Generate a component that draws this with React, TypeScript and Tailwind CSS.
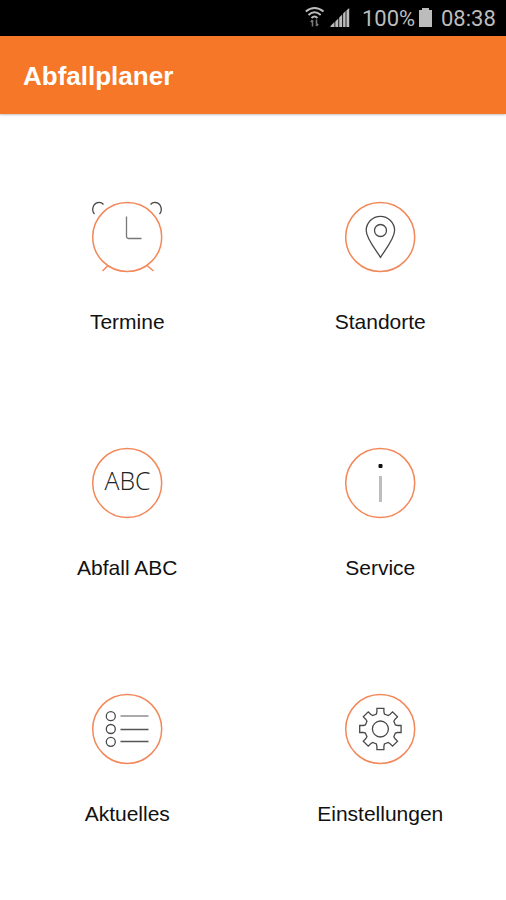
import type { ReactNode } from "react";

const INK = "#4a4a4a";
const ORANGE = "#f3885a";

function Ring({ children }: { children: ReactNode }) {
  return (
    <svg className="block h-[80px] w-[80px]" viewBox="-40 -40 80 80" fill="none" strokeWidth="1.3">
      <circle cx=".2" r="34.5" stroke={ORANGE} strokeWidth="1.5" />
      {children}
    </svg>
  );
}

function gearPath() {
  const tooth = [[-4, -15], [-3.5, -17.3], [-3.5, -20.7], [3.5, -20.7], [3.5, -17.3], [4, -15]];
  const points: string[] = [];
  for (let i = 0; i < 8; i++) {
    const a = (i * Math.PI) / 4;
    for (const [x, y] of tooth) {
      const px = x * Math.cos(a) - y * Math.sin(a);
      const py = x * Math.sin(a) + y * Math.cos(a);
      points.push(px.toFixed(2) + " " + py.toFixed(2));
    }
  }
  return "M" + points.join("L") + "Z";
}

const items: { label: string; icon: ReactNode }[] = [
  {
    label: "Termine",
    icon: (
      <>
        <path d="M-.5-20.5V-1Q-.5 1.5 2 1.5H14.5" stroke="#777" strokeWidth="1.3" />
        <path d="M-32.5-23C-36-27-34-34-28.5-34.5Q-25.5-34.8-23.5-32.5M32.5-23C36-27 34-34 28.5-34.5Q25.5-34.8 23.5-32.5" stroke={INK} />
        <path d="M-19 28.5L-24.5 34M20 28.5L26.5 34" stroke={ORANGE} strokeWidth="1.5" />
      </>
    ),
  },
  {
    label: "Standorte",
    icon: (
      <g stroke={INK}>
        <path d="M.5 20.3C-4 13-13.8 1.5-13.8-6.5A14.2 14.2 0 0 1 14.6-6.5C14.6 1.5 5 13 .5 20.3Z" />
        <circle cx=".5" cy="-6.5" r="6" />
      </g>
    ),
  },
  {
    label: "Abfall ABC",
    icon: (
      <text x=".5" y="7" textAnchor="middle" textLength="46" lengthAdjust="spacingAndGlyphs" fontSize="25" fontWeight="300" fill="#222" className="font-['Open_Sans',sans-serif]">
        ABC
      </text>
    ),
  },
  {
    label: "Service",
    icon: (
      <>
        <rect x="-1.5" y="-19" width="4" height="4" rx="1" fill="#111" />
        <rect x="-1" y="-7" width="3" height="26" fill="#bdbdbd" />
      </>
    ),
  },
  {
    label: "Aktuelles",
    icon: (
      <g stroke={INK}>
        <circle cx="-16.2" cy="-12.8" r="4.5" />
        <circle cx="-16.2" cy="0" r="4.5" />
        <circle cx="-16.2" cy="12.8" r="4.5" />
        <path d="M-6.5-13H21.5" stroke="#aaa" strokeWidth="2" />
        <path d="M-6.5 .5H21.5M-6.5 12.5H21.5" stroke="#555" />
      </g>
    ),
  },
  {
    label: "Einstellungen",
    icon: (
      <g stroke={INK}>
        <path d={gearPath()} transform="translate(.4 0)" />
        <circle cx=".4" r="8" />
      </g>
    ),
  },
];

function StatusBar() {
  return (
    <div className="flex h-9 items-center bg-black pl-[305px] font-['Roboto',sans-serif] text-[22px] text-[#bcbcbc]">
      <svg className="block h-9 w-[50px] shrink-0" viewBox="0 0 50 36" fill="none" stroke="#bcbcbc" strokeWidth="2">
        <path d="M.8 11.500Q9.500 4.500 18.500 11.500M3.500 15Q9.500 9.500 15.700 15M6.500 18Q9.500 15 12.500 18" />
        <path d="M7.500 26.500V20M5.800 22l1.700-2M11.500 19.500V26M13.200 24l-1.700 2" stroke="#777" strokeWidth="1.6" />
        <path d="M25.500 27v-1l4-4v5zM30.300 27v-5.500l3-3v8.500zM34.200 27v-9.500l3-3v12.500zM38.100 27v-13.500l2.500-2.500v16zM41.400 27V10.500l2.800-2.500v19z" fill="#bcbcbc" stroke="none" />
      </svg>
      <span className="ml-[7px] w-[55px]">100%</span>
      <svg className="block h-9 w-[16px] shrink-0" viewBox="0 0 16 36" fill="#bcbcbc">
        <path d="M2 10h3V8h7v2h3v17H2z" />
      </svg>
      <span className="ml-[8px]">08:38</span>
    </div>
  );
}

export default function App() {
  return (
    <div className="h-[900px] w-[506px] overflow-hidden bg-white font-['Liberation_Sans',Arial,sans-serif]">
      <StatusBar />
      <header className="flex h-[78px] items-center bg-[#f57727] pl-[23px] shadow-[0_1px_2px_rgba(0,0,0,0.25)]">
        <h1 className="pt-px text-[26px] leading-8 font-bold text-white">Abfallplaner</h1>
      </header>
      <main className="grid auto-rows-[246px] grid-cols-2 pt-[83px]">
        {items.map((item) => (
          <div key={item.label} className="flex flex-col items-center">
            <Ring>{item.icon}</Ring>
            <span className="mt-[33px] pl-[1.5px] text-[21px] leading-6 text-[#111]">{item.label}</span>
          </div>
        ))}
      </main>
    </div>
  );
}
